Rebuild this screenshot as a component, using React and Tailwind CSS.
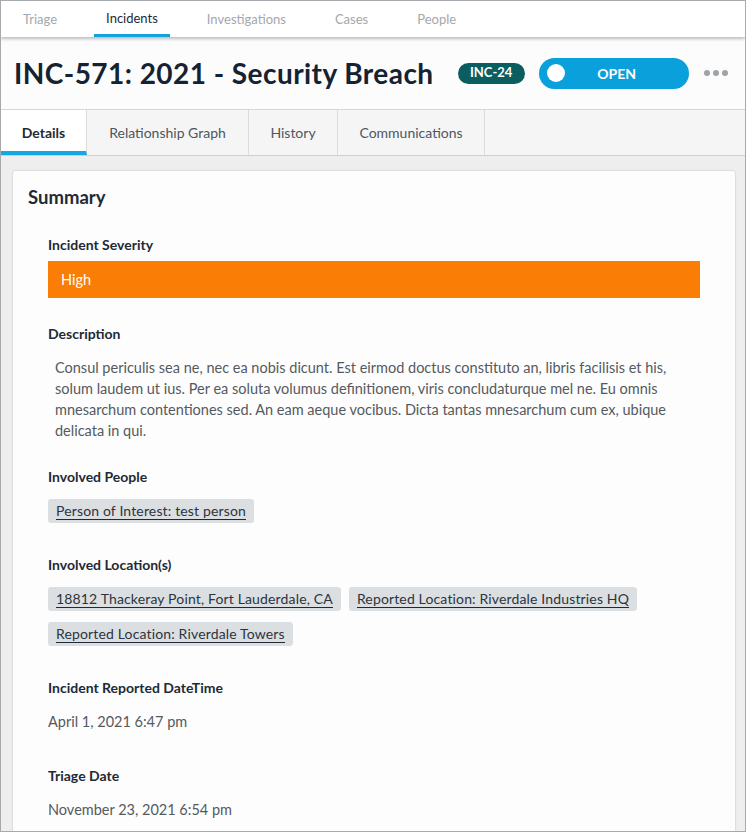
import React from 'react';

const FONT = { fontFamily: 'Lato, "Open Sans", sans-serif' };

const topTabs = ['Triage', 'Incidents', 'Investigations', 'Cases', 'People'];
const subTabs = [
  { name: 'Details', w: 'w-[86px]' },
  { name: 'Relationship Graph', w: 'w-[162px]' },
  { name: 'History', w: 'w-[89px]' },
  { name: 'Communications', w: 'w-[147px]' },
];

function Label({ children, className = '' }) {
  return (
    <div className={'text-[14px] font-bold leading-[16px] text-[#1e2a36] ' + className}>{children}</div>
  );
}

function Chip({ children }) {
  return (
    <span className="inline-flex h-[24px] items-center rounded-[3px] bg-[#dcdfe2] px-[8px] text-[14px] tracking-[0.15px] text-[#2b3440]">
      <span className="border-b border-[#1e2a36] leading-[17px]">{children}</span>
    </span>
  );
}

export default function App() {
  return (
    <div
      className="flex h-[832px] w-[746px] flex-col overflow-hidden border border-[#a6a9ad] bg-[#eeeeee]"
      style={FONT}
    >
      {/* top nav */}
      <nav className="relative z-20 flex h-[36px] shrink-0 items-stretch gap-[25px] bg-white pl-[10px] shadow-[0_2px_3px_rgba(0,0,0,0.25)]">
        {topTabs.map((t) => (
          <div
            key={t}
            className={
              'flex items-center px-[12px] text-[13px] ' +
              (t === 'Incidents'
                ? 'border-b-[3px] border-[#12a3df] pt-[3px] text-[#1e2a36]'
                : 'pt-[2px] text-[#a3a8ad]')
            }
          >
            {t}
          </div>
        ))}
      </nav>

      {/* header */}
      <header className="flex h-[73px] shrink-0 items-center whitespace-nowrap border-b border-[#d6d6d6] bg-[#fcfcfc] pl-[13px]">
        <h1 className="shrink-0 text-[28px] font-bold tracking-[0.45px] text-[#152232]">INC-571: 2021 - Security Breach</h1>
        <span className="ml-[24px] flex h-[21px] w-[67px] shrink-0 items-center justify-center rounded-full bg-[#0b5e5f] text-[13px] font-bold text-white">
          INC-24
        </span>
        <div className="ml-[14px] flex h-[31px] w-[150px] shrink-0 items-center rounded-full bg-[#0aa0dc] px-[8px]">
          <span className="h-[18px] w-[18px] rounded-full bg-white" />
          <span className="flex-1 pr-[12px] text-center text-[14px] font-bold text-white">OPEN</span>
        </div>
        <div className="ml-[15px] flex shrink-0 gap-[3px]">
          <span className="h-[6px] w-[6px] rounded-full bg-[#9ea3a8]" />
          <span className="h-[6px] w-[6px] rounded-full bg-[#9ea3a8]" />
          <span className="h-[6px] w-[6px] rounded-full bg-[#9ea3a8]" />
        </div>
      </header>

      {/* sub tabs */}
      <div className="flex h-[46px] shrink-0 border-b border-[#cfcfcf] bg-[#f5f5f5]">
        {subTabs.map((t) => (
          <div
            key={t.name}
            className={
              'flex items-center justify-center border-r border-[#dcdcdc] text-[14px] ' +
              t.w +
              (t.name === 'Details'
                ? ' border-b-[4px] border-b-[#12a8e3] bg-white pt-[4px] font-bold text-[#1e2a36]'
                : ' text-[#4d5660]')
            }
          >
            {t.name}
          </div>
        ))}
      </div>

      {/* content */}
      <main className="flex-1 overflow-hidden px-[12px] pt-[15px]">
        <section className="h-full w-[722px] rounded-t-[2px] bg-[#fdfdfd] pl-[15px] pt-[14px] shadow-[0_0_2px_rgba(0,0,0,0.25)]">
          <h2 className="text-[18.5px] font-bold leading-[24px] text-[#1e2a36]">Summary</h2>

          <div className="pl-[20px] pr-[33px]">
            <Label className="mt-[28px]">Incident Severity</Label>
            <div className="mt-[8px] flex h-[37px] w-[652px] items-center bg-[#fa7d05] pl-[13px] text-[14.5px] text-white">
              High
            </div>

            <Label className="mt-[28px]">Description</Label>
            <p className="mt-[15px] w-[622px] pl-[7px] text-[14.5px] leading-[21px] text-[#545a60]">
              Consul periculis sea ne, nec ea nobis dicunt. Est eirmod doctus constituto an, libris facilisis et his,
              solum laudem ut ius. Per ea soluta volumus definitionem, viris concludaturque mel ne. Eu omnis
              mnesarchum contentiones sed. An eam aeque vocibus. Dicta tantas mnesarchum cum ex, ubique
              delicata in qui.
            </p>

            <Label className="mt-[28px]">Involved People</Label>
            <div className="mt-[14px] flex">
              <Chip>Person of Interest: test person</Chip>
            </div>

            <Label className="mt-[34px]">Involved Location(s)</Label>
            <div className="mt-[14px] flex flex-wrap gap-x-[8px] gap-y-[11px]">
              <Chip>18812 Thackeray Point, Fort Lauderdale, CA</Chip>
              <Chip>Reported Location: Riverdale Industries HQ</Chip>
              <Chip>Reported Location: Riverdale Towers</Chip>
            </div>

            <Label className="mt-[34px]">Incident Reported DateTime</Label>
            <div className="mt-[16px] text-[14.5px] leading-[20px] text-[#545a60]">April 1, 2021 6:47 pm</div>

            <Label className="mt-[36px]">Triage Date</Label>
            <div className="mt-[16px] text-[14.5px] leading-[20px] text-[#545a60]">November 23, 2021 6:54 pm</div>
          </div>
        </section>
      </main>
    </div>
  );
}
